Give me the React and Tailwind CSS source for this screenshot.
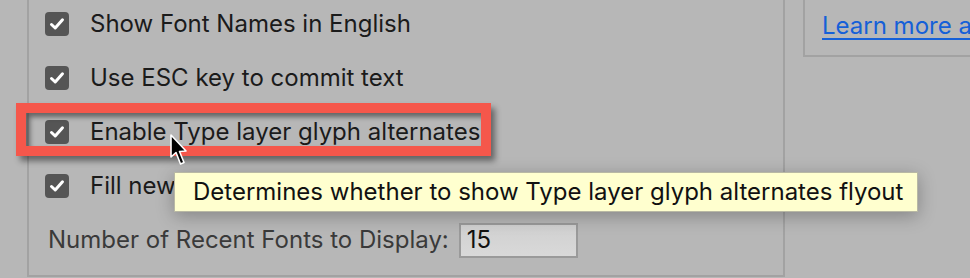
import React from 'react';

const font = { fontFamily: 'Inter, "Noto Sans", sans-serif' };

const Check = () => (
    <div className="w-6 h-6 rounded-[4px] bg-[#555555] flex items-center justify-center flex-shrink-0">
        <svg width="18" height="18" viewBox="0 0 18 18">
            <path d="M3.5 9.5 L7.2 13 L14.5 4.8" fill="none" stroke="#ffffff" strokeWidth="3" strokeLinecap="round" strokeLinejoin="round" />
        </svg>
    </div>
);

const Row = ({ label }) => (
    <div className="h-[54px] flex items-center gap-[21px]">
        <Check />
        <span className="text-[24px] text-[#1b1b1b] leading-none whitespace-nowrap">{label}</span>
    </div>
);

const App = () => {
    return (
        <div className="relative w-[970px] h-[278px] overflow-hidden bg-[#b7b7b7] flex" style={font}>
            {/* left gutter */}
            <div className="w-[27px] flex-shrink-0"></div>

            {/* Type preferences panel */}
            <div className="w-[758px] h-[277px] flex-shrink-0 border-l-2 border-r-2 border-b-2 border-[#a2a2a2] pl-[16px]">
                <div className="-mt-[3px] flex flex-col">
                    <Row label="Show Font Names in English" />
                    <Row label="Use ESC key to commit text" />
                    <Row label="Enable Type layer glyph alternates" />
                    <Row label="Fill new Type layers with placeholder text" />
                    <div className="h-[54px] flex items-center pl-[3px] gap-[10px]">
                        <span className="text-[24px] text-[#3a3a3a] leading-none whitespace-nowrap">Number of Recent Fonts to Display:</span>
                        <div className="w-[119px] h-[35px] border-2 border-[#9a9a9a] bg-gradient-to-b from-[#d0d0d0] to-[#d9d9d9] flex items-center pl-[6px]">
                            <span className="text-[24px] text-[#111111] leading-none">15</span>
                        </div>
                    </div>
                </div>
            </div>

            {/* right column */}
            <div className="ml-[18px] flex-1">
                <div className="h-[57px] border-l-2 border-b-2 border-[#a2a2a2] pl-[17px] pt-[14px] whitespace-nowrap">
                    <a href="#" className="text-[24px] text-[#1560d8] underline underline-offset-[4px] decoration-2 leading-none">Learn more about Type preferences</a>
                </div>
            </div>

            {/* annotation highlight */}
            <div className="absolute left-[16px] top-[103px] w-[475px] h-[53px] border-[10px] border-[#f5574b] shadow-[4px_5px_6px_rgba(0,0,0,0.45),inset_4px_4px_5px_rgba(0,0,0,0.45)] pointer-events-none"></div>

            {/* tooltip */}
            <div className="absolute left-[174px] top-[172px] w-[744px] h-[40px] bg-[#ffffcf] border border-[#b8b8a4] shadow-[0_4px_18px_rgba(0,0,0,0.28)] flex items-center pl-[18px]">
                <span className="text-[24px] text-[#111111] leading-none whitespace-nowrap">Determines whether to show Type layer glyph alternates flyout</span>
            </div>

            {/* cursor */}
            <svg className="absolute left-[169px] top-[133px]" width="20" height="36" viewBox="0 0 20 36">
                <path d="M2 2 L2 24 L7 19.5 L11.5 31 L15 29.5 L10.5 18.5 L17 18 Z" fill="#000000" stroke="#ffffff" strokeWidth="1.6" strokeLinejoin="round" />
            </svg>
        </div>
    );
};

export default App;
